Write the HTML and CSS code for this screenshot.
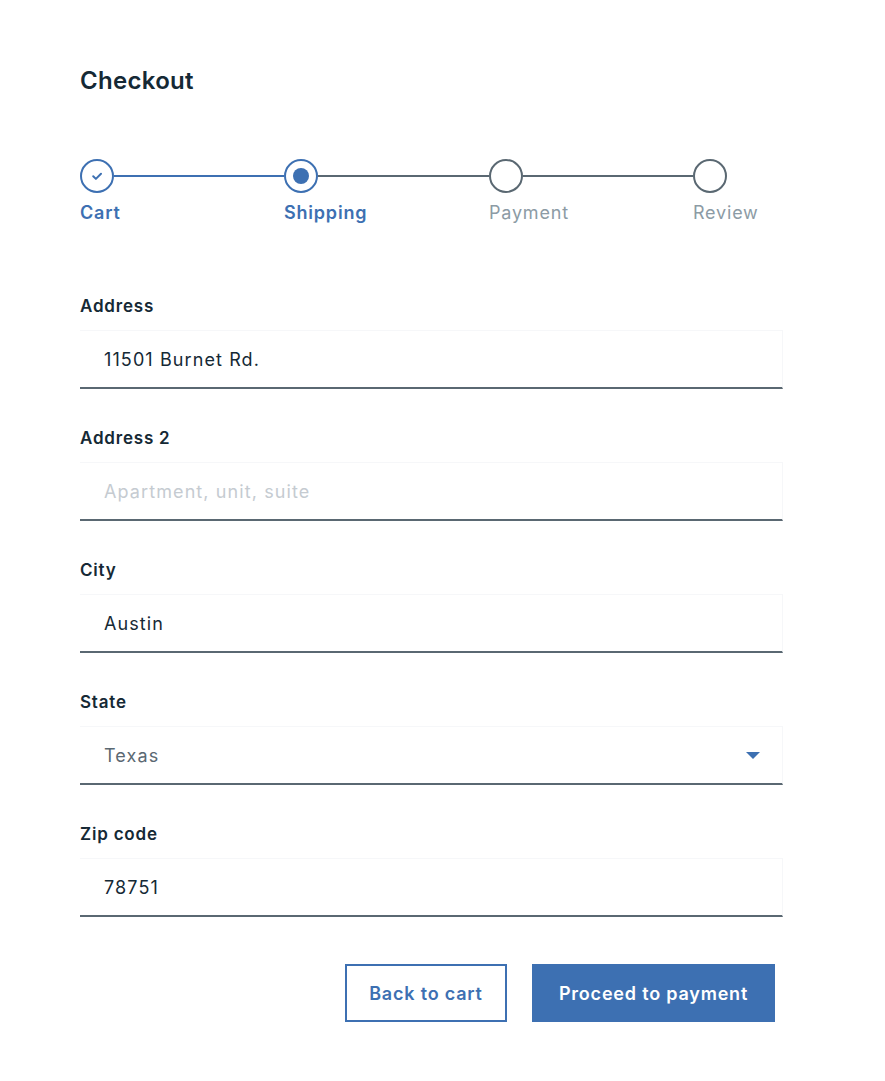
FILE: index.html
```html
<!DOCTYPE html>
<html lang="en">
<head>
<meta charset="utf-8">
<title>Checkout</title>
<link rel="stylesheet" href="styles.css">
</head>
<body>
<main class="page">
  <h1 class="title">Checkout</h1>

  <ol class="steps">
    <li class="step step--done">
      <div class="step__track">
        <span class="step__circle">
          <svg viewBox="0 0 34 34" width="34" height="34"><circle cx="17" cy="17" r="16" fill="none" stroke="#3d70b2" stroke-width="2"/><path d="M13.2 17.2 L15.9 19.9 L21 14.8" fill="none" stroke="#3d70b2" stroke-width="2" stroke-linecap="round" stroke-linejoin="round"/></svg>
        </span>
        <span class="step__line step__line--blue"></span>
      </div>
      <span class="step__label step__label--active">Cart</span>
    </li>
    <li class="step step--current">
      <div class="step__track">
        <span class="step__circle">
          <svg viewBox="0 0 34 34" width="34" height="34"><circle cx="17" cy="17" r="16" fill="none" stroke="#3d70b2" stroke-width="2"/><circle cx="17" cy="17" r="8" fill="#3d70b2"/></svg>
        </span>
        <span class="step__line"></span>
      </div>
      <span class="step__label step__label--active">Shipping</span>
    </li>
    <li class="step">
      <div class="step__track">
        <span class="step__circle">
          <svg viewBox="0 0 34 34" width="34" height="34"><circle cx="17" cy="17" r="16" fill="none" stroke="#5a6872" stroke-width="2"/></svg>
        </span>
        <span class="step__line"></span>
      </div>
      <span class="step__label">Payment</span>
    </li>
    <li class="step step--last">
      <div class="step__track">
        <span class="step__circle">
          <svg viewBox="0 0 34 34" width="34" height="34"><circle cx="17" cy="17" r="16" fill="none" stroke="#5a6872" stroke-width="2"/></svg>
        </span>
      </div>
      <span class="step__label">Review</span>
    </li>
  </ol>

  <form class="form">
    <div class="field">
      <label class="field__label" for="addr">Address</label>
      <div class="field__input"><span class="field__value">11501 Burnet Rd.</span></div>
    </div>
    <div class="field">
      <label class="field__label" for="addr2">Address 2</label>
      <div class="field__input"><span class="field__placeholder">Apartment, unit, suite</span></div>
    </div>
    <div class="field">
      <label class="field__label" for="city">City</label>
      <div class="field__input"><span class="field__value">Austin</span></div>
    </div>
    <div class="field">
      <label class="field__label" for="state">State</label>
      <div class="field__input field__input--select">
        <span class="field__value field__value--muted">Texas</span>
        <svg class="field__caret" viewBox="0 0 14 7" width="14" height="7"><path d="M0 0 H14 L7 7 Z" fill="#3d70b2"/></svg>
      </div>
    </div>
    <div class="field">
      <label class="field__label" for="zip">Zip code</label>
      <div class="field__input"><span class="field__value">78751</span></div>
    </div>

    <div class="actions">
      <button type="button" class="btn btn--secondary">Back to cart</button>
      <button type="button" class="btn btn--primary">Proceed to payment</button>
    </div>
  </form>
</main>
</body>
</html>
```

FILE: styles.css
```css
* { box-sizing: border-box; }

body {
  margin: 0;
  background: #ffffff;
  font-family: "Inter", "Noto Sans", sans-serif;
  color: #152935;
  letter-spacing: 0.8px;
}

.page {
  width: 703px;
  margin-left: 80px;
  padding-top: 64px;
}

.title {
  margin: 0;
  font-size: 24px;
  line-height: 34px;
  font-weight: 600;
  letter-spacing: 0.3px;
  color: #152935;
}

.steps {
  list-style: none;
  margin: 61px 0 0 0;
  padding: 0;
  display: grid;
  grid-template-columns: 204px 205px 204px auto;
}

.step {
  display: flex;
  flex-direction: column;
}

.step__track {
  display: flex;
  align-items: center;
  height: 34px;
}

.step__circle {
  display: block;
  width: 34px;
  height: 34px;
  flex: none;
}

.step__circle svg { display: block; }

.step__line {
  flex: 1;
  height: 2px;
  background: #5a6872;
}

.step__line--blue { background: #3d70b2; }

.step__label {
  margin-top: 9px;
  font-size: 18px;
  line-height: 22px;
  color: #8c9ba5;
  white-space: nowrap;
}

.step__label--active {
  color: #3d70b2;
  font-weight: 600;
}

.form {
  margin-top: 71px;
}

.field {
  margin-bottom: 38px;
}

.field__label {
  display: block;
  font-size: 17px;
  line-height: 22px;
  font-weight: 600;
  color: #152935;
}

.field__input {
  margin-top: 13px;
  height: 59px;
  display: flex;
  align-items: center;
  padding: 0 22px 0 24px;
  border-top: 1px solid #f6f7f9;
  border-right: 1px solid #f6f7f9;
  border-bottom: 2px solid #5a6872;
  background: #ffffff;
  font-size: 18px;
  letter-spacing: 1.1px;
}

.field__value { color: #152935; }
.field__value--muted { color: #5a6872; }
.field__placeholder { color: #c5cbd1; }

.field__input--select {
  justify-content: space-between;
}

.field__caret { display: block; margin-top: 1px; }

.actions {
  display: flex;
  justify-content: flex-end;
  gap: 25px;
  margin-top: 47px;
  padding-right: 8px;
}

.btn {
  height: 58px;
  font-family: inherit;
  font-size: 18px;
  font-weight: 600;
  letter-spacing: 0.8px;
  padding: 0 16px;
  cursor: pointer;
}

.btn--secondary {
  width: 162px;
  background: #ffffff;
  border: 2px solid #3d70b2;
  color: #3d70b2;
}

.btn--primary {
  width: 243px;
  background: #3d70b2;
  border: 2px solid #3d70b2;
  color: #ffffff;
}
```
